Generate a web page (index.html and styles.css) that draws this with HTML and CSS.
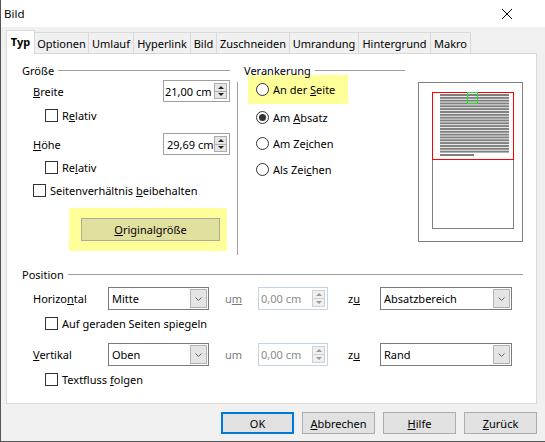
FILE: index.html
```html
<!DOCTYPE html>
<html lang="de">
<head>
<meta charset="utf-8">
<title>Bild</title>
<link rel="stylesheet" href="styles.css">
</head>
<body>
<div class="window">
  <div class="titlebar">
    <span class="title">Bild</span>
    <svg class="close" width="10" height="10" viewBox="0 0 10 10"><path d="M0 0L10 10M10 0L0 10" stroke="#000" stroke-width="1" fill="none"/></svg>
  </div>
  <div class="tabs">
    <div class="tab active t-typ">Typ</div>
    <div class="tab t-opt">Optionen</div>
    <div class="tab t-uml">Umlauf</div>
    <div class="tab t-hyp">Hyperlink</div>
    <div class="tab t-bild">Bild</div>
    <div class="tab t-zus">Zuschneiden</div>
    <div class="tab t-umr">Umrandung</div>
    <div class="tab t-hin">Hintergrund</div>
    <div class="tab t-mak">Makro</div>
  </div>
  <div class="panel">
    <div class="top">
      <div class="groesse">
        <div class="ghead"><span>Größe</span><i class="rule"></i></div>
        <div class="field f-breite">
          <span class="lbl"><u>B</u>reite</span>
          <div class="spin">
            <span class="val">21,00 cm</span>
            <span class="updown"><b class="ud up"></b><b class="ud down"></b></span>
          </div>
        </div>
        <div class="crow c-rel1"><span class="cb"></span><span>R<u>e</u>lativ</span></div>
        <div class="field f-hoehe">
          <span class="lbl"><u>H</u>öhe</span>
          <div class="spin">
            <span class="val val2">29,69 cm</span>
            <span class="updown"><b class="ud up"></b><b class="ud down"></b></span>
          </div>
        </div>
        <div class="crow c-rel2"><span class="cb"></span><span>Re<u>l</u>ativ</span></div>
        <div class="crow c-keep"><span class="cb"></span><span>Seitenverhältnis <u>b</u>eibehalten</span></div>
        <div class="yhl-btn">
          <div class="btn orig"><span><u>O</u>riginalgröße</span></div>
        </div>
      </div>
      <div class="sep"></div>
      <div class="verank">
        <div class="ghead vhead"><span>Verankerung</span><i class="rule"></i></div>
        <div class="yhl-radio"><span class="rb"></span><span>An der <u>S</u>eite</span></div>
        <div class="rrow"><span class="rb on"></span><span>Am <u>A</u>bsatz</span></div>
        <div class="rrow"><span class="rb"></span><span>Am Ze<u>i</u>chen</span></div>
        <div class="rrow"><span class="rb"></span><span>Als Zei<u>c</u>hen</span></div>
      </div>
      <div class="preview">
        <svg width="82" height="137" viewBox="0 0 82 137">
          <rect x="0.5" y="0.5" width="81" height="136" fill="#fff" stroke="#808080"/>
          <g fill="#808080">
            <rect x="8" y="2" width="69" height="2"/>
            <rect x="8" y="4.83" width="69" height="2"/>
            <rect x="8" y="7.66" width="69" height="2"/>
            <rect x="8" y="10.49" width="69" height="2"/>
            <rect x="8" y="13.32" width="69" height="2"/>
            <rect x="8" y="16.15" width="69" height="2"/>
            <rect x="8" y="18.98" width="69" height="2"/>
            <rect x="8" y="21.81" width="69" height="2"/>
            <rect x="8" y="24.64" width="69" height="2"/>
            <rect x="8" y="27.47" width="69" height="2"/>
            <rect x="8" y="30.3" width="69" height="2"/>
            <rect x="8" y="33.13" width="69" height="2"/>
            <rect x="8" y="35.96" width="69" height="2"/>
            <rect x="8" y="38.79" width="69" height="2"/>
            <rect x="8" y="41.62" width="69" height="2"/>
            <rect x="8" y="44.45" width="69" height="2"/>
            <rect x="8" y="47.28" width="69" height="2"/>
            <rect x="8" y="50.11" width="69" height="2"/>
            <rect x="8" y="52.94" width="69" height="2"/>
            <rect x="8" y="55.77" width="69" height="2"/>
            <rect x="8" y="58.6" width="69" height="2"/>
            <rect x="8" y="62" width="34" height="2"/>
          </g>
          <rect x="0.5" y="0.5" width="81" height="67" fill="none" stroke="#ff0000"/>
          <rect x="35.5" y="0.5" width="10" height="11" fill="none" stroke="#22dd22"/>
        </svg>
      </div>
    </div>
    <div class="position">
      <div class="ghead"><span>Position</span><i class="rule"></i></div>
      <div class="prow p-first">
        <span class="plbl">Horizo<u>n</u>tal</span>
        <div class="select"><span class="val">Mitte</span><span class="drop"><svg width="7" height="4" viewBox="0 0 7 4"><path d="M0.5 0.5L3.5 3.5L6.5 0.5" stroke="#606060" fill="none"/></svg></span></div>
        <span class="um">u<u>m</u></span>
        <div class="spin dis">
          <span class="val">0,00 cm</span>
          <span class="updown"><b class="ud up"></b><b class="ud down"></b></span>
        </div>
        <span class="zu">z<u>u</u></span>
        <div class="select wide"><span class="val">Absatzbereich</span><span class="drop"><svg width="7" height="4" viewBox="0 0 7 4"><path d="M0.5 0.5L3.5 3.5L6.5 0.5" stroke="#606060" fill="none"/></svg></span></div>
      </div>
      <div class="crow pc"><span class="cb"></span><span>Auf geraden Seiten spie<u>g</u>eln</span></div>
      <div class="prow p-second">
        <span class="plbl"><u>V</u>ertikal</span>
        <div class="select"><span class="val">Oben</span><span class="drop"><svg width="7" height="4" viewBox="0 0 7 4"><path d="M0.5 0.5L3.5 3.5L6.5 0.5" stroke="#606060" fill="none"/></svg></span></div>
        <span class="um">um</span>
        <div class="spin dis">
          <span class="val">0,00 cm</span>
          <span class="updown"><b class="ud up"></b><b class="ud down"></b></span>
        </div>
        <span class="zu">z<u>u</u></span>
        <div class="select wide"><span class="val">Rand</span><span class="drop"><svg width="7" height="4" viewBox="0 0 7 4"><path d="M0.5 0.5L3.5 3.5L6.5 0.5" stroke="#606060" fill="none"/></svg></span></div>
      </div>
      <div class="crow pc"><span class="cb"></span><span>Textfluss <u>f</u>olgen</span></div>
    </div>
  </div>
  <div class="buttons">
    <div class="btn ok">OK</div>
    <div class="btn"><span><u>A</u>bbrechen</span></div>
    <div class="btn"><span><u>H</u>ilfe</span></div>
    <div class="btn"><span><u>Z</u>urück</span></div>
  </div>
</div>
</body>
</html>
```
FILE: styles.css
```css
* { box-sizing: border-box; }
body {
  margin: 0;
  font-family: "Noto Sans", "Open Sans", sans-serif;
  font-size: 11px;
  color: #000;
  background: #fff;
}
u { text-decoration: underline; text-underline-offset: 1px; }
b { font-weight: normal; }

.window {
  width: 545px;
  height: 442px;
  background: #f0f0f0;
  border-left: 1px solid #555;
  border-bottom: 1px solid #555;
  display: flex;
  flex-direction: column;
}
.titlebar {
  height: 27px;
  flex: none;
  background: #fff;
  display: flex;
  align-items: center;
  justify-content: space-between;
  padding: 0 33px 0 3px;
  font-size: 11.5px;
}

.tabs {
  height: 26px;
  flex: none;
  display: flex;
  align-items: flex-end;
  padding-left: 5px;
}
.tab {
  height: 21px;
  border: 1px solid #d9d9d9;
  border-bottom: none;
  margin-left: -1px;
  display: flex;
  align-items: center;
  justify-content: center;
  background: #f0f0f0;
  white-space: nowrap;
}
.tab.active {
  height: 24px;
  margin-left: 0;
  margin-bottom: -1px;
  background: #fff;
  font-weight: bold;
  position: relative;
  z-index: 1;
  padding-bottom: 2px;
}
.t-typ { width: 29px; }
.t-opt { width: 55px; }
.t-uml { width: 46px; }
.t-hyp { width: 58px; }
.t-bild { width: 27px; }
.t-zus { width: 74px; }
.t-umr { width: 70px; }
.t-hin { width: 73px; }
.t-mak { width: 41px; }

.panel {
  flex: none;
  margin-left: 5px;
  width: 531px;
  height: 351px;
  border: 1px solid #d9d9d9;
  background: #fff;
  padding: 8px 0 0 15px;
}
.top { display: flex; height: 193px; }

.ghead { height: 16px; display: flex; align-items: center; }
.ghead .rule { flex: 1; border-top: 1px solid #a0a0a0; margin-left: 4px; height: 0; }

.groesse { width: 208px; flex: none; }
.field {
  height: 22px;
  display: flex;
  align-items: center;
  padding-left: 11px;
}
.f-breite { margin-top: 2px; }
.f-hoehe { margin-top: 7px; }
.lbl { flex: 1; }

.crow {
  height: 22px;
  display: flex;
  align-items: center;
  gap: 4px;
  padding-left: 23px;
}
.c-rel1 { margin-top: 2px; }
.c-rel2 { margin-top: 1px; }
.c-keep { margin-top: 1px; padding-left: 11px; }

.cb {
  width: 13px;
  height: 13px;
  flex: none;
  border: 1px solid #333;
  background: #fff;
}

.spin {
  width: 67px;
  height: 22px;
  border: 1px solid #a0a0a0;
  background: #fff;
  display: flex;
  align-items: stretch;
}
.spin .val {
  flex: 1;
  overflow: hidden;
  white-space: nowrap;
  padding-left: 1px;
  display: flex;
  align-items: center;
}
.spin .val2 { padding-left: 3px; }
.updown {
  width: 13px;
  flex: none;
  margin: 2px 2px 2px 0;
  display: flex;
  flex-direction: column;
  border: 1px solid #adadad;
  background: #e6e6e6;
}
.ud {
  flex: 1;
  display: flex;
  align-items: center;
  justify-content: center;
}
.ud.up { border-bottom: 1px solid #adadad; }
.ud.up::after {
  content: "";
  border-left: 3px solid transparent;
  border-right: 3px solid transparent;
  border-bottom: 3px solid #222;
}
.ud.down::after {
  content: "";
  border-left: 3px solid transparent;
  border-right: 3px solid transparent;
  border-top: 3px solid #222;
}
.spin.dis { width: 70px; height: 23px; border-color: #c2d3ea; }
.spin.dis .val { color: #8a8a8a; padding-left: 2px; }
.spin.dis .updown { background: #f0f0f0; border-color: #cfcfcf; }
.spin.dis .ud.up { border-bottom-color: #cfcfcf; }
.spin.dis .ud.up::after { border-bottom-color: #9a9a9a; }
.spin.dis .ud.down::after { border-top-color: #9a9a9a; }

.yhl-btn {
  margin: 7px 0 0 47px;
  width: 158px;
  height: 43px;
  background: #ffff99;
  padding: 10px 0 0 12px;
}
.btn {
  height: 22px;
  width: 73px;
  border: 1px solid #adadad;
  background: #e1e1e1;
  display: flex;
  align-items: center;
  justify-content: center;
  white-space: nowrap;
}
.btn.orig { width: 139px; height: 23px; background: #e0e09f; border-color: #acac9a; }
.btn.ok { border: 2px solid #0078d7; }

.sep {
  flex: none;
  margin-left: 7px;
  margin-top: 20px;
  height: 173px;
  border-left: 1px solid #a0a0a0;
}
.verank { margin-left: 6px; width: 161px; flex: none; }
.vhead { margin-bottom: -3px; }
.yhl-radio {
  margin-left: 4px;
  width: 100px;
  height: 29px;
  background: #ffff99;
  padding-left: 8px;
  display: flex;
  align-items: center;
  gap: 4px;
}
.rrow {
  height: 26px;
  display: flex;
  align-items: center;
  gap: 4px;
  padding-left: 12px;
}
.rb {
  width: 13px;
  height: 13px;
  flex: none;
  border: 1px solid #333;
  border-radius: 50%;
  background: #fff;
  display: flex;
  align-items: center;
  justify-content: center;
}
.rb.on::after {
  content: "";
  width: 7px;
  height: 7px;
  border-radius: 50%;
  background: #333;
}

.preview {
  flex: none;
  margin-left: 13px;
  margin-top: 20px;
  width: 105px;
  height: 160px;
  border: 1px solid #808080;
  padding: 9px 0 0 13px;
}
.preview svg { display: block; }

.position { margin-top: 11px; width: 501px; }
.prow {
  height: 23px;
  display: flex;
  align-items: center;
  padding-left: 11px;
}
.p-first { margin-top: 5px; }
.p-second { margin-top: 8px; }
.pc { margin-top: 2px; height: 23px; }
.plbl { width: 75px; flex: none; }
.select {
  width: 101px;
  height: 23px;
  flex: none;
  border: 1px solid #7a7a7a;
  background: #fff;
  display: flex;
  align-items: stretch;
}
.select.wide { width: 132px; }
.select .val { flex: 1; padding-left: 3px; display: flex; align-items: center; }
.select .drop {
  width: 17px;
  margin: 1px;
  background: #e5e5e5;
  border: 1px solid #b3b3b3;
  display: flex;
  align-items: center;
  justify-content: center;
}
.select .drop svg { display: block; }
.um { margin-left: 16px; width: 33px; flex: none; color: #7a7a7a; }
.zu { margin-left: 20px; width: 32px; flex: none; }

.buttons {
  flex: none;
  margin-top: 8px;
  display: flex;
  justify-content: flex-end;
  gap: 8px;
  padding-right: 8px;
}
```
